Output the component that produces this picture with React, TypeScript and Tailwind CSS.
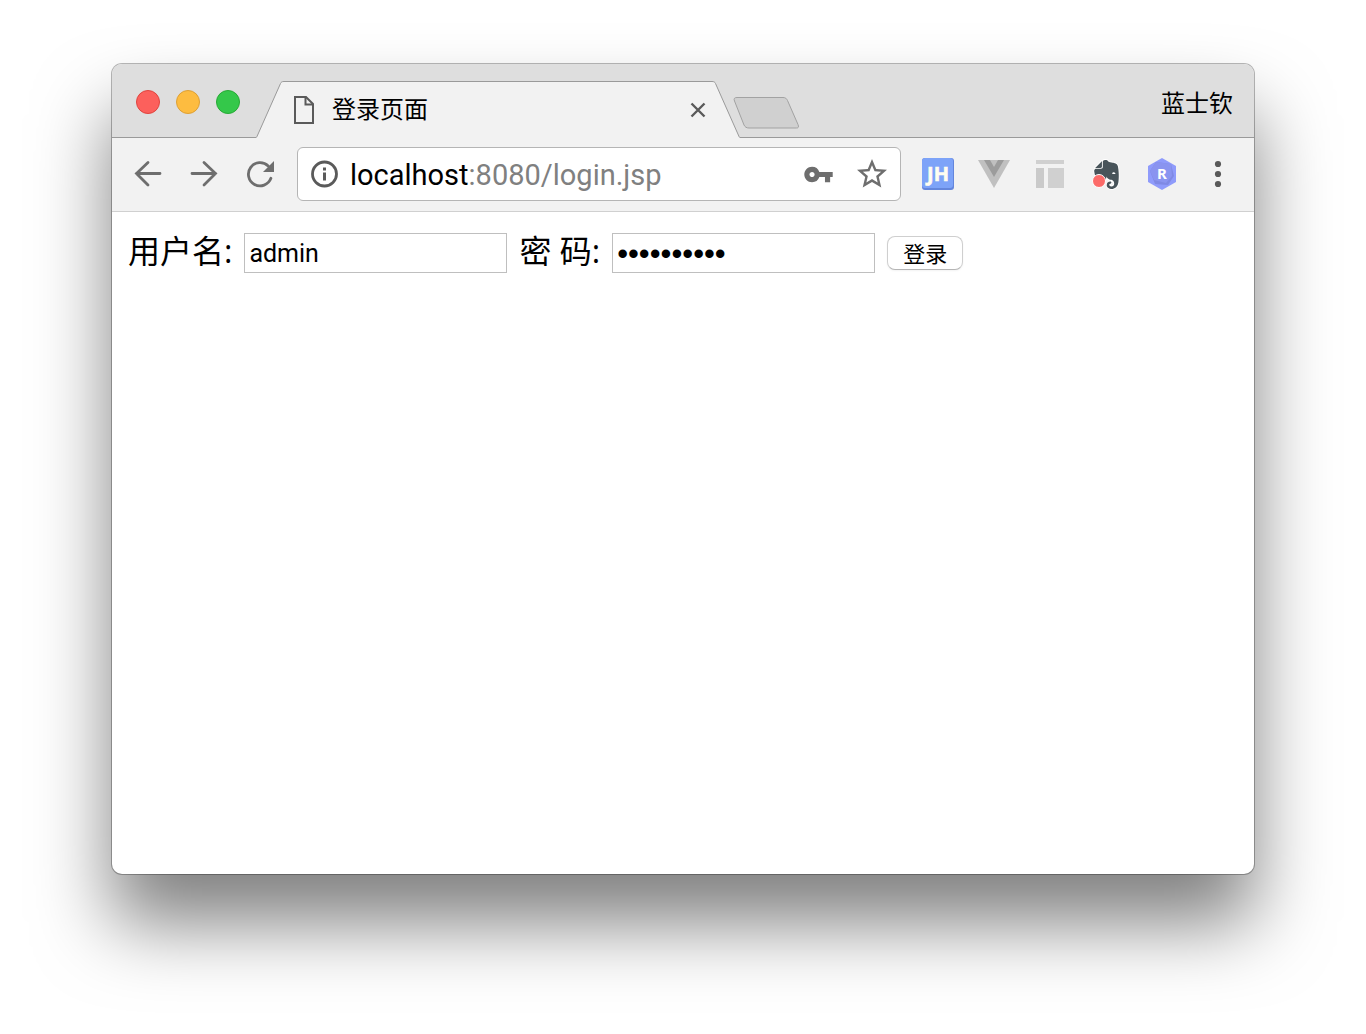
import React from "react";
import { MdStarBorder, MdVpnKey } from "react-icons/md";
import { SiEvernote } from "react-icons/si";

function TitleBar() {
  return (
    <header className="flex h-[74px] rounded-t-[10px] bg-[#dedede] pt-[17px] font-['Noto_Sans_CJK_SC',sans-serif] text-2xl text-black">
      <div className="flex shrink-0 items-start gap-4 border-b border-[#9a9a9a] pt-[9px] pr-4 pl-6">
        <button type="button" aria-label="Close window" className="size-6 rounded-full border border-[#e0443e] bg-[#fc605c]" />
        <button type="button" aria-label="Minimize window" className="size-6 rounded-full border border-[#dea034] bg-[#fdbc40]" />
        <button type="button" aria-label="Zoom window" className="size-6 rounded-full border border-[#27aa35] bg-[#34c84a]" />
      </div>
      <div className="flex min-w-0 max-w-[484px] flex-1">
        <svg viewBox="0 0 28 57" className="h-[57px] w-7 shrink-0" fill="#f2f2f2">
          <path d="M0 57V56.5C.5 56.500 .8 56 1.200 55L24.500 2.500C25.200 1 26 .5 28 .5V57Z" />
          <path d="M0 56.500C.5 56.500 .8 56 1.200 55L24.500 2.500C25.200 1 26 .5 28 .5" fill="none" stroke="#9a9a9a" />
        </svg>
        <div className="flex min-w-0 flex-1 items-center border-t border-[#9a9a9a] bg-[#f2f2f2] pl-2">
          <svg viewBox="0 0 24 30" className="h-[30px] w-6 shrink-0" fill="none" stroke="#5a5a5a" strokeWidth="2">
            <path d="M3 2H14L21 9V28H3Z" />
            <path d="M13.500 2V9.500H21" />
          </svg>
          <span className="ml-4 flex-1 pb-1 leading-9 whitespace-nowrap">登录页面</span>
          <button type="button" aria-label="Close tab" className="shrink-0 pr-[5px]">
            <svg viewBox="0 0 18 18" className="size-[18px]" stroke="#5a5a5a" strokeWidth="2.4">
              <path d="M2.500 2.500L15.500 15.500M15.500 2.500L2.500 15.500" />
            </svg>
          </button>
        </div>
        <svg viewBox="0 0 28 57" className="h-[57px] w-7 shrink-0" fill="#f2f2f2">
          <path d="M28 57V56.500C27.500 56.500 27.200 56 26.800 55L3.500 2.500C2.800 1 2 .5 0 .5V57Z" />
          <path d="M28 56.500C27.500 56.500 27.200 56 26.800 55L3.500 2.500C2.800 1 2 .5 0 .5" fill="none" stroke="#9a9a9a" />
        </svg>
      </div>
      <div className="flex flex-1 items-start justify-between border-b border-[#9a9a9a] pr-[21px]">
        <button type="button" aria-label="New tab" className="-ml-2 pt-[15px]">
          <svg viewBox="0 0 68 34" className="h-[34px] w-[68px]" fill="#d0d0d0" stroke="#a2a2a2">
            <path d="M5 1.500H51C53.500 1.500 54.500 2.500 55.500 4.500L66 28.500C67 31 66.500 32 64.500 32H17C14.500 32 13 31 12 29L2.500 5C1.500 2.500 2.500 1.500 5 1.500Z" />
          </svg>
        </button>
        <button type="button" className="mt-[3px] leading-9 whitespace-nowrap">蓝士钦</button>
      </div>
    </header>
  );
}

function NavButtons() {
  return (
    <nav className="flex shrink-0 gap-6">
      <button type="button" aria-label="Back">
        <svg viewBox="0 0 32 32" className="size-8" fill="none" stroke="#6e6e6e" strokeWidth="2.8" strokeLinecap="round">
          <path d="M28 15.500H4.500M16 4.500L4.500 15.500L16 27" />
        </svg>
      </button>
      <button type="button" aria-label="Forward">
        <svg viewBox="0 0 32 32" className="size-8" fill="none" stroke="#6e6e6e" strokeWidth="2.8" strokeLinecap="round">
          <path d="M4 15.500H27.500M16 4.500L27.500 15.500L16 27" />
        </svg>
      </button>
      <button type="button" aria-label="Reload">
        <svg viewBox="0 0 32 32" className="size-8" fill="none" stroke="#6e6e6e" strokeWidth="2.8" strokeLinecap="round">
          <path d="M26.900 20.300A11.600 11.600 0 1 1 24.200 8" />
          <path d="M30 3V14H19Z" fill="#6e6e6e" stroke="none" />
        </svg>
      </button>
    </nav>
  );
}

function AddressBar() {
  return (
    <div className="flex h-[54px] min-w-0 flex-1 items-center rounded-md border border-[#b5b5b5] bg-white pr-2.5 pl-3">
      <button type="button" aria-label="Site information" className="shrink-0">
        <svg viewBox="0 0 28 28" className="size-7" fill="#5a5a5a">
          <circle cx="14.500" cy="14" r="12" fill="none" stroke="#5a5a5a" strokeWidth="2.8" />
          <path d="M13 7.500H16V10.500H13ZM13 12.500H16V20.500H13Z" />
        </svg>
      </button>
      <div
        role="textbox"
        aria-label="Address"
        contentEditable
        suppressContentEditableWarning
        className="ml-3 min-w-0 flex-1 truncate pt-0.5 font-['Roboto',sans-serif] text-[29px] leading-10 text-[#808080]"
      >
        <span className="text-black">localhost</span>:8080/login.jsp
      </div>
      <button type="button" aria-label="Saved passwords" className="mr-5 shrink-0">
        <MdVpnKey className="size-[31px] text-[#6e6e6e]" />
      </button>
      <button type="button" aria-label="Bookmark this page" className="shrink-0">
        <MdStarBorder className="size-9 text-[#6e6e6e]" />
      </button>
    </div>
  );
}

function Extensions() {
  return (
    <div className="flex shrink-0 gap-6">
      <button type="button" aria-label="JH">
        <svg viewBox="0 0 32 32" className="size-8">
          <rect width="32" height="32" rx="3" fill="#6486dc" />
          <rect width="31" height="30" rx="3" fill="#7da3f8" />
          <text x="16" y="23" textAnchor="middle" fill="#fffdf0" stroke="#fffdf0" strokeWidth="0.6" fontFamily="Noto Sans" fontWeight="700" fontSize="20">JH</text>
        </svg>
      </button>
      <button type="button" aria-label="Vue devtools">
        <svg viewBox="0 0 32 32" className="size-8">
          <path d="M0 2H32L16 30Z" fill="#c0c0c0" />
          <path d="M6 2H12L16 9L20 2H26L16 19Z" fill="#9c9c9c" />
        </svg>
      </button>
      <button type="button" aria-label="Page layout">
        <svg viewBox="0 0 32 32" className="size-8" fill="#d0d0d0">
          <rect x="2" y="2" width="28" height="4" />
          <rect x="2" y="10" width="8" height="20" fill="#cacaca" />
          <rect x="14" y="10" width="16" height="20" />
        </svg>
      </button>
      <button type="button" aria-label="Evernote" className="relative flex size-8 items-center justify-center">
        <SiEvernote className="size-[29px] overflow-visible text-[#48545a] [paint-order:stroke]" stroke="#ffffff" strokeWidth="1.500" />
        <span className="absolute bottom-0.5 left-0.5 size-[14px] rounded-full border border-white bg-[#fc6b69]" />
      </button>
      <button type="button" aria-label="R">
        <svg viewBox="0 0 32 32" className="size-8">
          <path d="M16 0L30 8V24L16 32L2 24V8Z" fill="#8f9bfb" />
          <path d="M10 4L25 6L28 18L22 27L9 26L4 13Z" fill="#7f89e4" />
          <path d="M10 4L25 6L26 18L20 25L8 22L4 13Z" fill="#8a94f0" />
          <text x="16" y="21" textAnchor="middle" fill="#ffffff" fontFamily="Noto Sans" fontWeight="700" fontSize="15">R</text>
        </svg>
      </button>
      <button type="button" aria-label="Menu">
        <svg viewBox="0 0 32 32" className="size-8" fill="#5a5a5a">
          <circle cx="16" cy="6" r="3.100" />
          <circle cx="16" cy="16" r="3.100" />
          <circle cx="16" cy="26" r="3.100" />
        </svg>
      </button>
    </div>
  );
}

function LoginForm() {
  return (
    <form
      className="flex items-center gap-3 px-4 pt-[21px] font-['Open_Sans','Noto_Sans_CJK_SC',sans-serif] text-[32px] leading-9 whitespace-nowrap text-black"
      onSubmit={(e) => e.preventDefault()}
    >
      <label htmlFor="username" className="pb-1">用户名:</label>
      <input
        id="username"
        type="text"
        defaultValue="admin"
        className="h-10 w-[263px] border border-[#bfbfbf] bg-white px-1 font-['Roboto',sans-serif] text-[25px] outline-none"
      />
      <label htmlFor="password" className="pb-1">密 码:</label>
      <input
        id="password"
        type="password"
        defaultValue="password12"
        className="h-10 w-[263px] border border-[#bfbfbf] bg-white px-1 pt-0.5 font-['Liberation_Sans',sans-serif] text-[31px] outline-none"
      />
      <button
        type="submit"
        className="h-[34px] w-[76px] rounded-lg border border-[#cfcfcf] border-b-[#b5b5b5] bg-white pb-0.5 font-['Noto_Sans_CJK_SC',sans-serif] text-[22px] leading-[30px] shadow-xs"
      >
        登录
      </button>
    </form>
  );
}

export default function App() {
  return (
    <div className="flex min-h-screen bg-white px-28 pt-16 pb-40">
      <div className="flex min-w-0 flex-1 flex-col rounded-[10px] bg-white shadow-[0_0_0_1px_rgba(0,0,0,0.28),0_49px_76px_rgba(0,0,0,0.5)]">
        <TitleBar />
        <div className="flex h-[74px] items-center border-b border-[#d0d0d0] bg-[#f2f2f2] px-5 pb-px">
          <NavButtons />
          <div className="ml-[21px] flex min-w-0 flex-1 items-center gap-[21px]">
            <AddressBar />
            <Extensions />
          </div>
        </div>
        <main className="flex-1">
          <LoginForm />
        </main>
      </div>
    </div>
  );
}
